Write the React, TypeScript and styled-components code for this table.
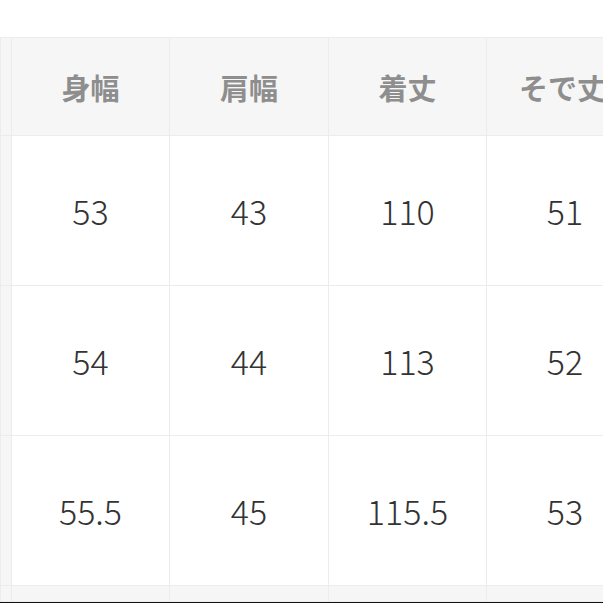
import React from 'react';
import styled, { createGlobalStyle } from 'styled-components';

const GlobalStyle = createGlobalStyle`
  html, body {
    margin: 0;
    padding: 0;
    background: #ffffff;
  }
`;

const Page = styled.div`
  width: 603px;
  height: 603px;
  overflow: hidden;
  display: flex;
  flex-direction: column;
  background: #fff;
  font-family: 'Noto Sans CJK JP', 'Noto Sans', sans-serif;
`;

const TopSpace = styled.div`
  height: 37px;
  flex: none;
`;

const SizeTable = styled.table`
  border-collapse: collapse;
  table-layout: fixed;
  width: 643px;
  flex: none;
`;

const HeadCell = styled.th<{ $edge?: boolean }>`
  height: 97px;
  padding: 0;
  background: #f6f6f6;
  border: 1px solid #ececec;
  color: #8e8e8e;
  font-size: 29px;
  font-weight: 700;
  text-align: center;
  vertical-align: middle;
  white-space: nowrap;
  overflow: hidden;
  ${({ $edge }) => ($edge ? 'text-align: left; padding-left: 32px;' : '')}
`;

const SideCell = styled.td<{ $short?: boolean }>`
  height: ${({ $short }) => ($short ? '15px' : '149px')};
  padding: 0;
  background: #f6f6f6;
  border: 1px solid #ececec;
`;

const ValueCell = styled.td`
  height: 149px;
  padding: 0;
  border: 1px solid #ececec;
  color: #333333;
  font-size: 34px;
  font-weight: 300;
  text-align: center;
  vertical-align: middle;
`;

const FootCell = styled.td`
  height: 15px;
  padding: 0;
  background: #f6f6f6;
  border: 1px solid #ececec;
`;

const BottomBar = styled.div`
  flex: none;
  height: 3px;
  background: #111;
`;

const headers = ['身幅', '肩幅', '着丈', 'そで丈'];

const rows = [
  ['53', '43', '110', '51'],
  ['54', '44', '113', '52'],
  ['55.5', '45', '115.5', '53'],
];

const App = () => (
  <>
    <GlobalStyle />
    <Page>
      <TopSpace />
      <SizeTable>
        <colgroup>
          <col style={{ width: 11 }} />
          <col style={{ width: 158 }} />
          <col style={{ width: 159 }} />
          <col style={{ width: 158 }} />
          <col style={{ width: 157 }} />
        </colgroup>
        <thead>
          <tr>
            <HeadCell />
            {headers.map((h, i) => (
              <HeadCell key={h} $edge={i === headers.length - 1}>
                {h}
              </HeadCell>
            ))}
          </tr>
        </thead>
        <tbody>
          {rows.map((r, i) => (
            <tr key={i}>
              <SideCell />
              {r.map((v, j) => (
                <ValueCell key={j}>{v}</ValueCell>
              ))}
            </tr>
          ))}
          <tr>
            <SideCell $short />
            {headers.map((h) => (
              <FootCell key={h} />
            ))}
          </tr>
        </tbody>
      </SizeTable>
      <BottomBar />
    </Page>
  </>
);

export default App;
